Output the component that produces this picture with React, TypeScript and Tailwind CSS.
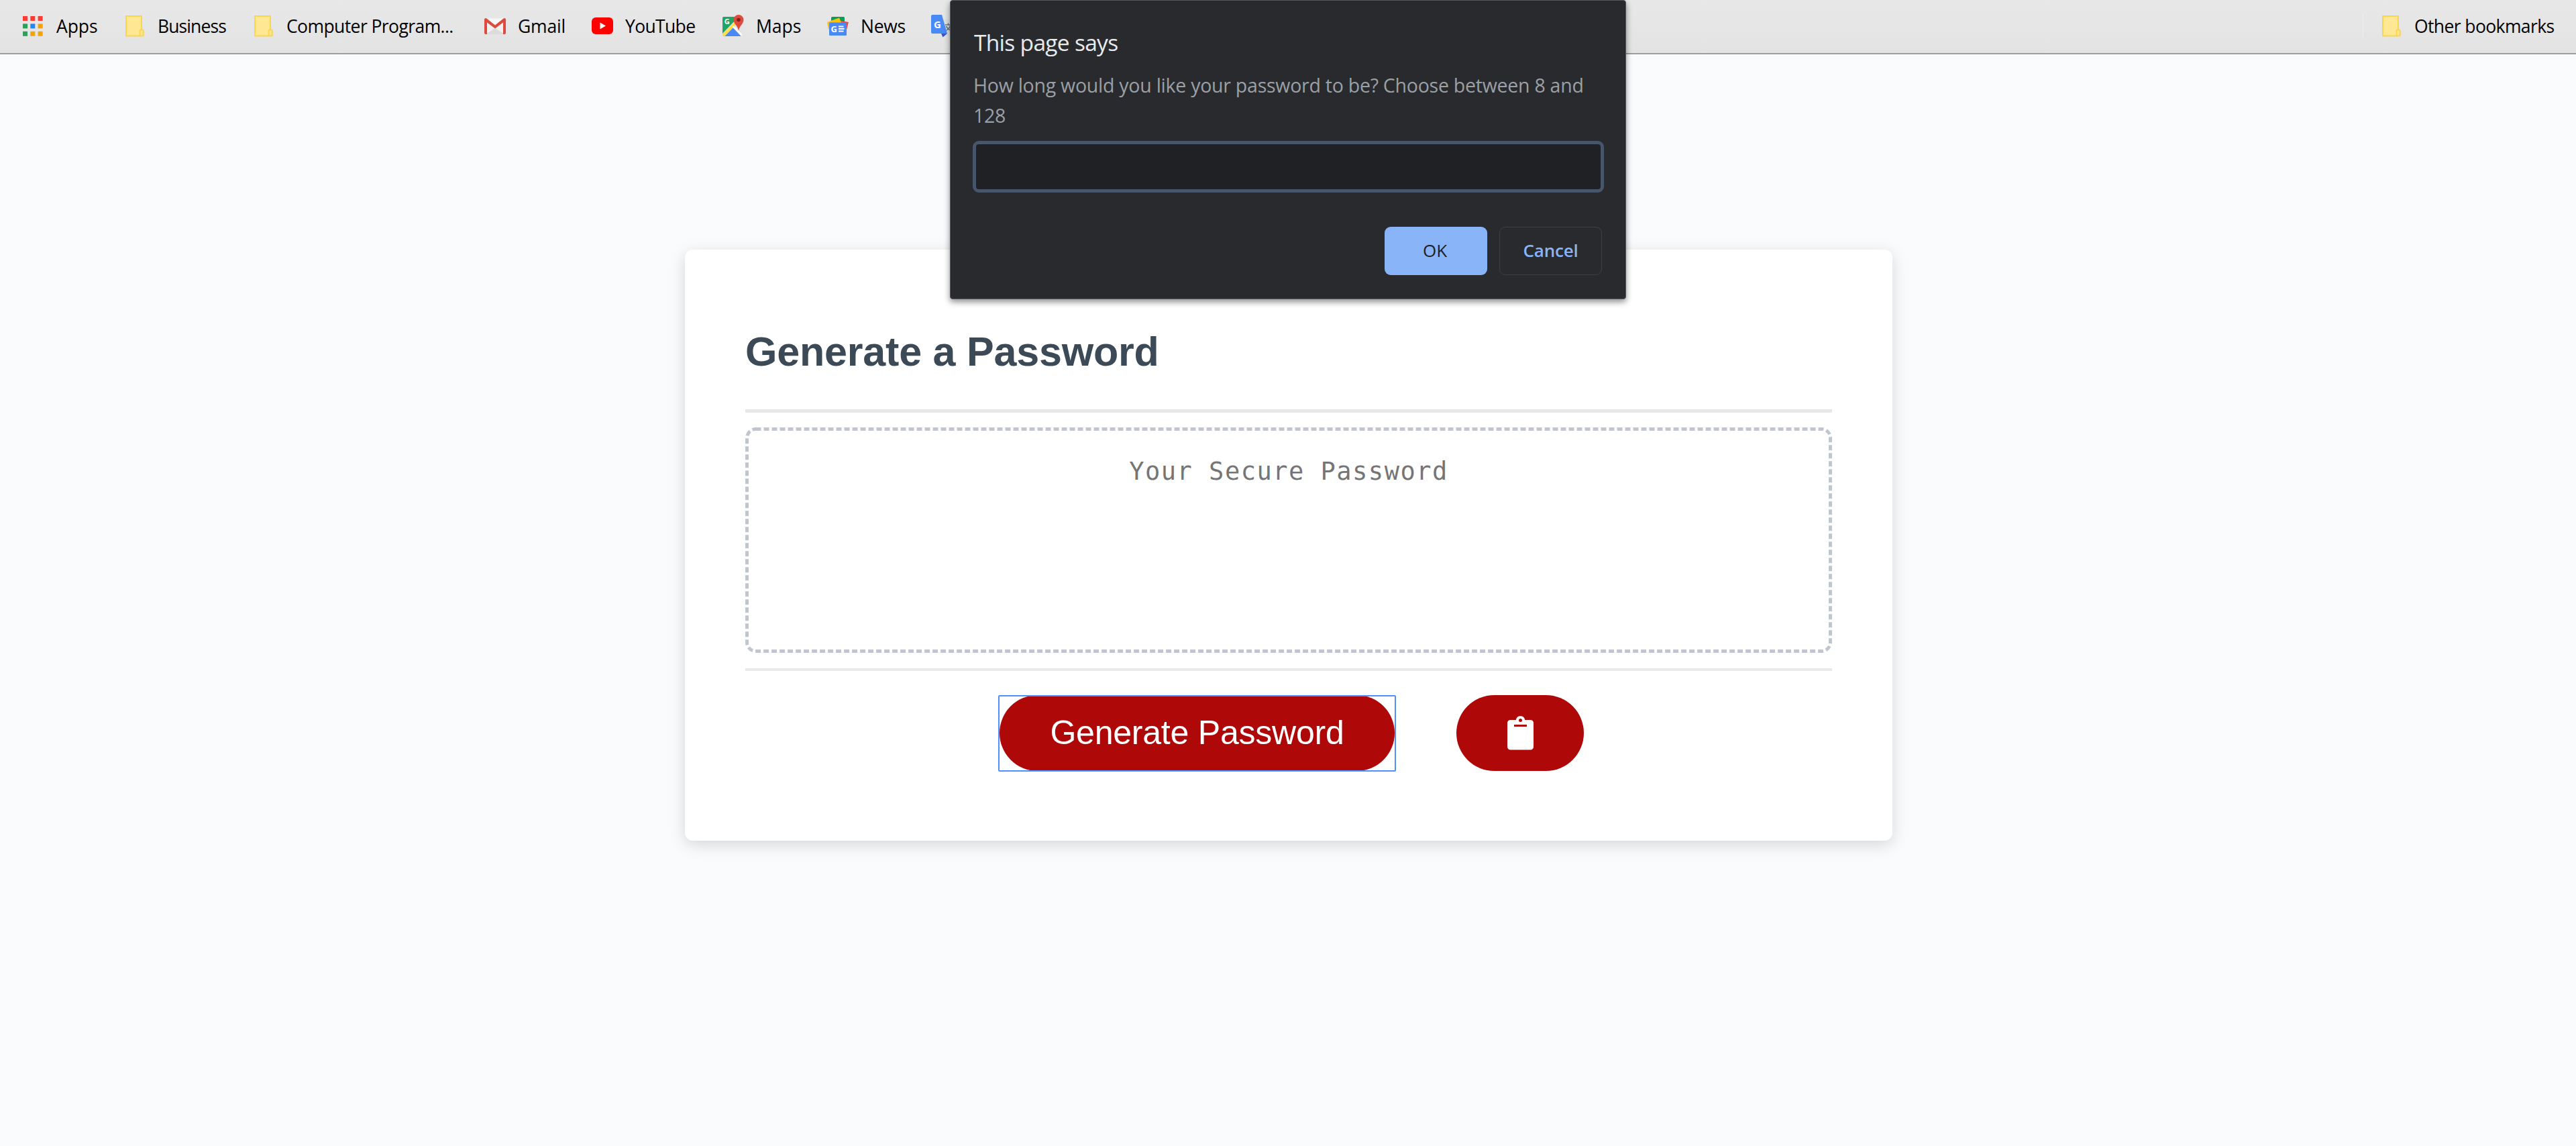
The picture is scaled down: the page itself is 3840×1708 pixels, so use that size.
import type { ReactNode } from 'react'

const UI_FONT = "font-['Open_Sans','Noto_Sans',sans-serif]"

function AppsIcon() {
  const rows = [
    ['#fb3b34', '#fb3b34', '#fb3b34'],
    ['#2f9e57', '#1e88f7', '#f5a302'],
    ['#2f9e57', '#f5a302', '#f5a302'],
  ]
  return (
    <svg width="32" height="32" viewBox="0 0 32 32">
      {rows.map((row, y) =>
        row.map((fill, x) => (
          <rect key={`${x}-${y}`} x={x * 11.3} y={1 + y * 11.4} width="7" height="7" fill={fill} />
        ))
      )}
    </svg>
  )
}

function FolderIcon() {
  return (
    <svg width="32" height="34" viewBox="0 0 32 34">
      <path d="M3 2h23v20.5h1.200a1.500 1.500 0 0 1 1.500 1.500v7.500H3z" fill="#ffe794" stroke="#fad551" strokeWidth="2" strokeLinejoin="round" />
      <path d="M23.500 31v-7a1.800 1.800 0 0 1 2.500-1.500" fill="none" stroke="#fad551" strokeWidth="1.800" />
    </svg>
  )
}

function GmailIcon() {
  return (
    <svg width="32" height="24" viewBox="0 0 32 24">
      <path d="M2 0h28v24H2z" fill="#f1f1f1" />
      <path d="M16 15l14 9H2z" fill="#dcdcdc" />
      <path d="M2.500 1.500h27L16 13z" fill="#f8f8f8" />
      <path d="M0 2a2 2 0 0 1 3.400-1.400L16 10.500 28.600.6A2 2 0 0 1 32 2v20a2 2 0 0 1-2 2h-2V6.500L16 15.500 4 6.500V24H2a2 2 0 0 1-2-2z" fill="#dd4b3e" />
    </svg>
  )
}

function YouTubeIcon() {
  return (
    <svg width="32" height="25" viewBox="0 0 32 25">
      <rect width="32" height="25" rx="6" fill="#f00" />
      <path d="M12.500 7.500v10l8.500-5z" fill="#fff" />
    </svg>
  )
}

function MapsIcon() {
  return (
    <svg width="32" height="34" viewBox="0 0 32 34">
      <clipPath id="map">
        <rect x="0" y="3" width="29" height="29" rx="2" />
      </clipPath>
      <g clipPath="url(#map)">
        <rect y="3" width="30" height="30" fill="#e3e3e3" />
        <path d="M0 3h24L0 28z" fill="#1fa463" />
        <path d="M15 17.500L1 32h27z" fill="#4a89f3" />
        <path d="M-1 29.500L18 10.500l2 4.500L3 32.500z" fill="#ffdd4b" />
        <path d="M15.500 17l15 15.500" stroke="#fff" strokeWidth="3" />
      </g>
      <path d="M24 0a7.500 7.500 0 0 1 7.500 7.500c0 6-6.500 9-7.500 16.500-1-7.500-7.500-10.500-7.500-16.500A7.500 7.500 0 0 1 24 0z" fill="#dd4b3e" />
      <circle cx="24" cy="7.500" r="2.800" fill="#7f231c" />
      <text x="2.800" y="14" fontSize="11" fontWeight="700" fill="#fff">G</text>
    </svg>
  )
}

function NewsIcon() {
  return (
    <svg width="32" height="28" viewBox="0 0 32 28">
      <rect x="6" y="0" width="20" height="14" rx="1.500" fill="#0c9d58" />
      <path d="M16 5l16 3-4 15-14-6z" fill="#f44a3f" />
      <path d="M0 8l18-6.500 4 9-20 8z" fill="#ffc107" />
      <rect x="3" y="8.500" width="26" height="19.500" rx="1.500" fill="#4a89f4" />
      <text x="5.500" y="22.500" fontSize="13" fontWeight="700" fill="#fff">G</text>
      <path d="M17 14.500h7.500M17 18h8.500M17 21.500h7.500" stroke="#fff" strokeWidth="2" />
    </svg>
  )
}

function TranslateIcon() {
  return (
    <svg width="32" height="34" viewBox="0 0 32 34">
      <path d="M14 7h17v24H18z" fill="#dfe1e4" />
      <path d="M15 28h9l-6.500 5.500z" fill="#3a56c5" />
      <path d="M2 0h14l8 28H2a2 2 0 0 1-2-2V2a2 2 0 0 1 2-2z" fill="#4a8af4" />
      <text x="4" y="19.500" fontSize="15" fontWeight="700" fill="#fff">G</text>
      <path d="M21 15h9M25.500 12.500V15M29 15c-1 4-3 6-6 8M22.500 17c1 2.500 3 4.500 6 6" fill="none" stroke="#5d7f86" strokeWidth="1.600" />
    </svg>
  )
}

type Bookmark = { label: string; icon: ReactNode; box: string; tracking: string }

const BOOKMARKS: Bookmark[] = [
  { label: 'Apps', icon: <AppsIcon />, box: 'w-[151px]', tracking: 'tracking-[-0.1px]' },
  { label: 'Business', icon: <FolderIcon />, box: 'w-[192px]', tracking: 'tracking-[-0.9px]' },
  { label: 'Computer Program...', icon: <FolderIcon />, box: 'w-[345px]', tracking: 'tracking-[-0.58px]' },
  { label: 'Gmail', icon: <GmailIcon />, box: 'w-[160px]', tracking: 'tracking-[-0.2px]' },
  { label: 'YouTube', icon: <YouTubeIcon />, box: 'w-[195px]', tracking: 'tracking-[-0.65px]' },
  { label: 'Maps', icon: <MapsIcon />, box: 'w-[156px]', tracking: 'tracking-normal' },
  { label: 'News', icon: <NewsIcon />, box: 'w-[155px]', tracking: 'tracking-[-0.3px]' },
  { label: '', icon: <TranslateIcon />, box: 'w-[32px]', tracking: 'tracking-normal' },
]

function BookmarkItem({ label, icon, box, tracking }: Bookmark) {
  return (
    <div className={`flex items-center gap-[18px] shrink-0 ${box}`}>
      <span className="flex w-8 shrink-0 justify-center">{icon}</span>
      {label && <span className={`whitespace-nowrap text-[26.5px] leading-[36px] ${tracking}`}>{label}</span>}
    </div>
  )
}

function BookmarksBar() {
  return (
    <nav className={`flex h-[81px] justify-between border-b-2 border-[#9e9e9e] bg-linear-to-b from-[#e8e8e8] to-[#e3e3e3] pb-[2px] pl-[34px] text-black ${UI_FONT}`}>
      <div className="flex">
        {BOOKMARKS.map((b) => (
          <BookmarkItem key={b.label} {...b} />
        ))}
      </div>
      <div className="flex items-center">
        <span className="mr-[26px] h-9 w-px bg-[#eeeeee]" />
        <BookmarkItem label="Other bookmarks" icon={<FolderIcon />} box="w-[291px]" tracking="tracking-[-0.6px]" />
      </div>
    </nav>
  )
}

function PromptDialog() {
  return (
    <div
      role="dialog"
      className={`absolute left-[1416px] top-0 h-[446px] w-[1008px] rounded-[4px] border border-[#56585b] bg-[#292a2d] pl-[33px] pr-[32px] pt-[40px] shadow-[0_4px_10px_rgba(0,0,0,0.45)] ${UI_FONT}`}
    >
      <h2 className="pl-[2px] text-[33.5px] leading-[44px] tracking-[-0.7px] text-[#e8eaed]">This page says</h2>
      <p className="mt-5 whitespace-nowrap pl-px text-[28.5px] leading-[45px] tracking-[-0.25px] text-[#9aa0a6]">
        How long would you like your password to be? Choose between 8 and
        <br />
        128
      </p>
      <input
        type="text"
        className="mt-[15px] block h-[77px] w-[941px] rounded-[9px] border-[5px] border-[#48566c] bg-[#202124] px-4 text-[28px] text-[#e8eaed] outline-none"
      />
      <div className="mt-[51px] flex justify-end gap-[18px] pr-[3px]">
        <button type="button" className="h-[72px] w-[153px] rounded-[9px] bg-[#8ab4f8] pb-[2px] pr-[3px] text-[26px] font-medium text-[#202124]">
          OK
        </button>
        <button type="button" className="h-[72px] w-[153px] rounded-[9px] border border-[#3c4043] pb-[2px] text-[26px] font-semibold tracking-[-0.2px] text-[#8ab4f8]">
          Cancel
        </button>
      </div>
    </div>
  )
}

function ClipboardIcon() {
  return (
    <svg width="39" height="51" viewBox="0 0 39 51">
      <path
        fillRule="evenodd"
        fill="#fff"
        d="M4.500 6h8.300a6.800 6.800 0 0 1 13.400 0h8.300A4.500 4.500 0 0 1 39 10.500V46a4.500 4.500 0 0 1-4.500 4.500h-30A4.500 4.500 0 0 1 0 46V10.500A4.500 4.500 0 0 1 4.500 6zm15-2a2.500 2.500 0 1 0 0 5 2.500 2.500 0 0 0 0-5zM10 13v3h19v-3z"
      />
    </svg>
  )
}

function GeneratorCard() {
  return (
    <section className="ml-[1021px] mt-[291px] h-[881px] w-[1800px] rounded-[12px] bg-white px-[90px] pt-[117px] font-['Liberation_Sans',Arial,sans-serif] shadow-[0_6px_24px_rgba(0,0,0,0.15)]">
      <h1 className="text-[61px] font-bold leading-[70px] tracking-[-0.2px] text-[#3b4a56]">Generate a Password</h1>
      <div className="mt-[51px] h-[5px] bg-[#e6e7e9]" />

      <div className="relative mt-[22px] h-[336px] pt-[44px] text-center">
        {/* dashed outline of the password field */}
        <svg className="absolute inset-0" width="1620" height="336" viewBox="0 0 1620 336">
          <rect x="2.500" y="2.500" width="1615" height="331" rx="13" fill="none" stroke="#c0c6cf" strokeWidth="5" strokeDasharray="8 4" />
        </svg>
        <p className="font-['DejaVu_Sans_Mono',monospace] text-[37px] leading-[44px] tracking-[1.5px] text-[#757575]">
          Your Secure Password
        </p>
      </div>

      <div className="mt-[23px] h-[4px] bg-[#e9e9e9]" />
      <div className="ml-[379px] mt-[36px] flex gap-[92px]">
        <div className="relative h-[113px] w-[589px]">
          <button type="button" className="h-full w-full rounded-full bg-[#ae0808] text-[50px] tracking-[-0.22px] text-white outline-none">
            Generate Password
          </button>
          {/* square focus ring */}
          <span className="pointer-events-none absolute -bottom-px -left-[2px] -right-[2px] top-0 rounded-[2px] border-2 border-[#4d90fe]" />
        </div>
        <button type="button" className="flex h-[113px] w-[190px] items-center justify-center rounded-full bg-[#ae0808]">
          <ClipboardIcon />
        </button>
      </div>
    </section>
  )
}

export default function App() {
  return (
    <div className="relative h-[1708px] w-[3840px] overflow-hidden bg-[#f9fbfd]">
      <BookmarksBar />
      <GeneratorCard />
      <PromptDialog />
    </div>
  )
}
